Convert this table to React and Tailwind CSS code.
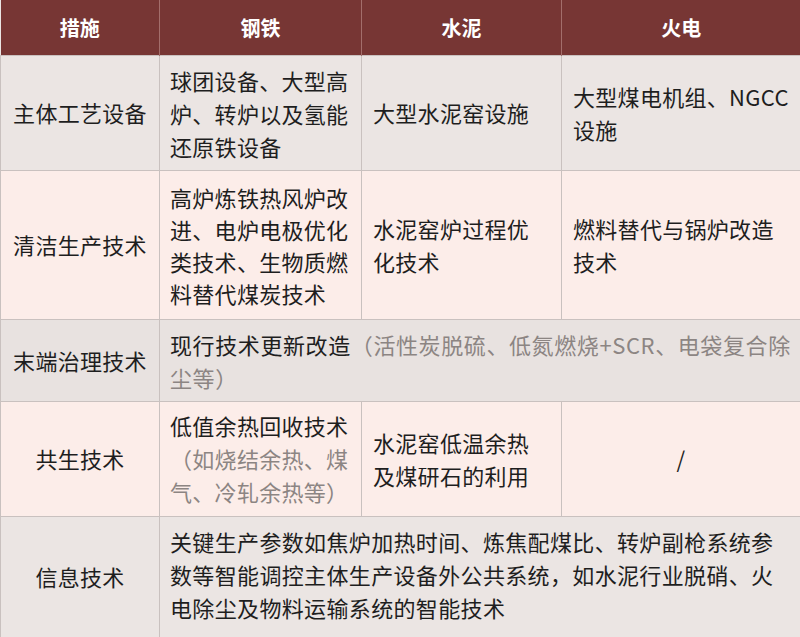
import React from "react";

const G = ({ children }) => <span className="text-[#8c8583]">{children}</span>;
const L = ({ children }) => <span className="block">{children}</span>;

export default function App() {
  const td = "border border-[#c9c1bf] align-middle";
  return (
    <div
      className="w-[800px] h-[637px] overflow-hidden bg-[#ebe5e3]"
      style={{ fontFamily: '"Noto Sans CJK SC", "Noto Sans", sans-serif' }}
    >
      <table className="table-fixed border-collapse w-[800px] text-[22px] leading-[33px] text-[#1e1e1e]">
        <colgroup>
          <col className="w-[159px]" />
          <col className="w-[202px]" />
          <col className="w-[200px]" />
          <col className="w-[239px]" />
        </colgroup>
        <thead>
          <tr className="h-[55px] bg-[#773634] text-white text-[20px] font-bold">
            <th className="border-r border-[#a36e6b] text-center">措施</th>
            <th className="border-r border-[#a36e6b] text-center">钢铁</th>
            <th className="border-r border-[#a36e6b] text-center">水泥</th>
            <th className="text-center">火电</th>
          </tr>
        </thead>
        <tbody className="tracking-[0.3px]">
          <tr className="h-[115px] bg-[#ebe5e3]">
            <td className={`${td} text-center`}>主体工艺设备</td>
            <td className={`${td} pl-[10px] pt-[2px]`}>
              <L>球团设备、大型高</L>
              <L>炉、转炉以及氢能</L>
              <L>还原铁设备</L>
            </td>
            <td className={`${td} pl-[11px]`}>大型水泥窑设施</td>
            <td className={`${td} pl-[11px]`}>
              <L>大型煤电机组、NGCC</L>
              <L>设施</L>
            </td>
          </tr>
          <tr className="h-[149px] bg-[#fcede9]">
            <td className={`${td} text-center`}>清洁生产技术</td>
            <td className={`${td} pl-[10px] leading-[32px]`}>
              <L>高炉炼铁热风炉改</L>
              <L>进、电炉电极优化</L>
              <L>类技术、生物质燃</L>
              <L>料替代煤炭技术</L>
            </td>
            <td className={`${td} pl-[11px]`}>
              <L>水泥窑炉过程优</L>
              <L>化技术</L>
            </td>
            <td className={`${td} pl-[11px]`}>
              <L>燃料替代与锅炉改造</L>
              <L>技术</L>
            </td>
          </tr>
          <tr className="h-[82px] bg-[#e8e2e0]">
            <td className={`${td} text-center`}>末端治理技术</td>
            <td className={`${td} pl-[10px] pt-[2px] tracking-[0.6px]`} colSpan={3}>
              <L>
                现行技术更新改造<G>（活性炭脱硫、低氮燃烧+SCR、电袋复合除</G>
              </L>
              <L>
                <G>尘等）</G>
              </L>
            </td>
          </tr>
          <tr className="h-[115px] bg-[#fcede9]">
            <td className={`${td} text-center`}>共生技术</td>
            <td className={`${td} pl-[10px]`}>
              <L>低值余热回收技术</L>
              <L>
                <G>（如烧结余热、煤</G>
              </L>
              <L>
                <G>气、冷轧余热等）</G>
              </L>
            </td>
            <td className={`${td} pl-[11px]`}>
              <L>水泥窑低温余热</L>
              <L>及煤研石的利用</L>
            </td>
            <td className={`${td} text-center`}>/</td>
          </tr>
          <tr className="h-[121px] bg-[#ebe5e3]">
            <td className={`${td} text-center`}>信息技术</td>
            <td className={`${td} pl-[10px] pb-[4px] tracking-[0.35px]`} colSpan={3}>
              <L>关键生产参数如焦炉加热时间、炼焦配煤比、转炉副枪系统参</L>
              <L>数等智能调控主体生产设备外公共系统，如水泥行业脱硝、火</L>
              <L>电除尘及物料运输系统的智能技术</L>
            </td>
          </tr>
        </tbody>
      </table>
    </div>
  );
}
